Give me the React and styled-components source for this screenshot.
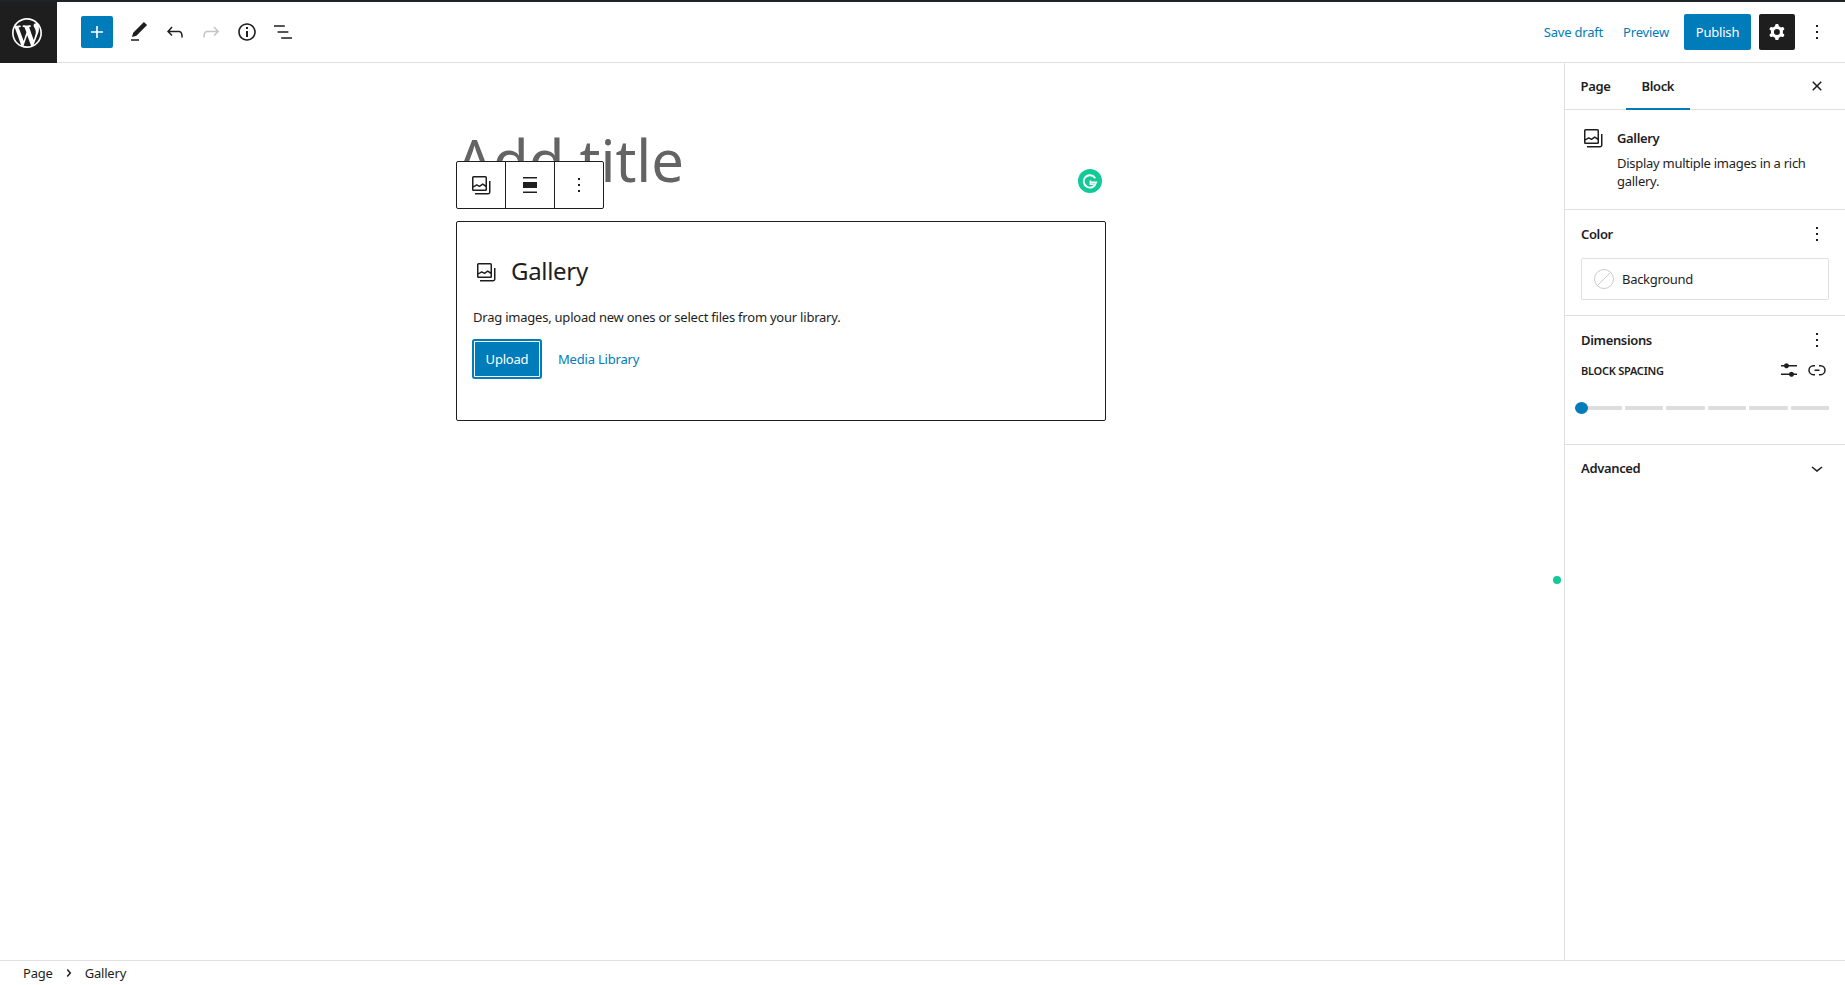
import React from 'react'
import styled, { createGlobalStyle } from 'styled-components'

const GlobalStyle = createGlobalStyle`
    html, body {
        margin: 0;
        padding: 0;
        height: 100%;
        background: #fff;
    }
    body {
        font-family: "Noto Sans", "Open Sans", sans-serif;
        font-size: 13px;
        color: #1e1e1e;
        overflow: hidden;
    }
    * {
        box-sizing: border-box;
    }
`

const BLUE = '#007cba'
const INK = '#1e1e1e'
const LINE = '#e0e0e0'
const GREEN = '#12c998'

const Icon = ({ d, size = 24, box = 24, color = 'currentColor', evenodd }) => (
    <svg width={size} height={size} viewBox={`0 0 ${box} ${box}`} fill={color} aria-hidden="true">
        <path d={d} fillRule={evenodd ? 'evenodd' : undefined} clipRule={evenodd ? 'evenodd' : undefined} />
    </svg>
)

const paths = {
    wordpress: 'M20 10c0-5.51-4.49-10-10-10C4.48 0 0 4.49 0 10c0 5.52 4.48 10 10 10 5.51 0 10-4.48 10-10zM7.78 15.37L4.37 6.22c.55-.02 1.17-.08 1.17-.08.5-.06.44-1.13-.06-1.11 0 0-1.45.11-2.37.11-.18 0-.37 0-.58-.01C4.12 2.69 6.87 1.11 10 1.11c2.33 0 4.45.87 6.05 2.34-.68-.11-1.65.39-1.65 1.58 0 .74.45 1.36.9 2.1.35.61.55 1.36.55 2.46 0 1.49-1.4 5-1.4 5l-3.03-8.37c.54-.02.82-.17.82-.17.5-.05.44-1.25-.06-1.22 0 0-1.44.12-2.38.12-.87 0-2.33-.12-2.33-.12-.5-.03-.56 1.2-.06 1.22l.92.08 1.26 3.41zM17.41 10c.24-.64.74-1.87.43-4.25.7 1.29 1.05 2.71 1.05 4.25 0 3.29-1.73 6.24-4.4 7.78.97-2.59 1.94-5.2 2.92-7.78zM6.1 18.09C3.12 16.65 1.11 13.53 1.11 10c0-1.3.23-2.48.72-3.59C3.25 10.3 4.67 14.2 6.1 18.09zm4.03-6.63l2.58 6.98c-.86.29-1.76.45-2.71.45-.79 0-1.57-.11-2.29-.33.81-2.38 1.62-4.74 2.42-7.1z',
    plus: 'M18 11.2h-5.2V6h-1.6v5.2H6v1.6h5.2V18h1.6v-5.2H18z',
    edit: 'M20.1 5.1L16.9 2 6.2 12.7l-1.3 4.4 4.5-1.3L20.1 5.1zM4 20.8h8v-1.5H4v1.5z',
    undo: 'M18.3 11.7c-.6-.6-1.4-.9-2.3-.9H6.7l2.9-3.3-1.1-1-4.5 5L8.5 16l1-1-2.7-2.7H16c.5 0 .9.2 1.3.5 1 1 1 3.4 1 4.5v.3h1.5v-.2c0-1.5 0-4.3-1.5-5.7z',
    redo: 'M15.6 6.5l-1.1 1 2.9 3.3H8c-.9 0-1.7.3-2.3.9-1.4 1.5-1.4 4.2-1.4 5.6v.2h1.5v-.3c0-1.1 0-3.5 1-4.5.3-.3.7-.5 1.3-.5h9.2L14.5 15l1.1 1.1 4.6-4.6-4.6-5z',
    info: 'M12 3.2c-4.8 0-8.8 3.9-8.8 8.8 0 4.8 3.9 8.8 8.8 8.8 4.8 0 8.8-3.9 8.8-8.8 0-4.8-4-8.8-8.8-8.8zm0 16c-4 0-7.2-3.3-7.2-7.2C4.8 8 8 4.8 12 4.8s7.2 3.3 7.2 7.2c0 4-3.2 7.2-7.2 7.2zM11 17h2v-6h-2v6zm0-8h2V7h-2v2z',
    listView: 'M13.8 5.2H3v1.5h10.8V5.2zm-3.6 12v1.5H21v-1.5H10.2zm7.2-6H6.6v1.5h10.8v-1.5z',
    cog: 'M10.289 4.836A1 1 0 0111.275 4h1.306a1 1 0 01.987.836l.244 1.466c.787.26 1.503.679 2.108 1.218l1.393-.522a1 1 0 011.216.437l.653 1.13a1 1 0 01-.23 1.273l-1.148.944a6.025 6.025 0 010 2.435l1.149.946a1 1 0 01.23 1.272l-.653 1.13a1 1 0 01-1.216.437l-1.394-.522c-.605.54-1.32.958-2.108 1.218l-.244 1.466a1 1 0 01-.987.836h-1.306a1 1 0 01-.986-.836l-.244-1.466a5.995 5.995 0 01-2.108-1.218l-1.394.522a1 1 0 01-1.217-.436l-.653-1.131a1 1 0 01.23-1.272l1.149-.946a6.026 6.026 0 010-2.435l-1.148-.944a1 1 0 01-.23-1.272l.653-1.131a1 1 0 011.217-.437l1.393.522a5.994 5.994 0 012.108-1.218l.244-1.466zM14.929 12a3 3 0 11-6 0 3 3 0 016 0z',
    more: 'M13 19h-2v-2h2v2zm0-6h-2v-2h2v2zm0-6h-2V5h2v2z',
    close: 'M12 13.06l3.712 3.713 1.061-1.06L13.061 12l3.712-3.712-1.06-1.06L12 10.938 8.288 7.227l-1.061 1.06L10.939 12l-3.712 3.712 1.06 1.061L12 13.061z',
    gallery: 'M16.375 4.5H4.625a.125.125 0 0 0-.125.125v8.254l2.859-1.54a.75.75 0 0 1 .68-.016l2.384 1.142 2.89-2.074a.75.75 0 0 1 .874 0l2.313 1.66V4.625a.125.125 0 0 0-.125-.125Zm.125 9.398-2.75-1.975-2.813 2.02a.75.75 0 0 1-.76.067l-2.444-1.17L4.5 14.583v1.792c0 .069.056.125.125.125h11.75a.125.125 0 0 0 .125-.125v-2.477ZM4.625 3C3.728 3 3 3.728 3 4.625v11.75C3 17.273 3.728 18 4.625 18h11.75c.898 0 1.625-.727 1.625-1.625V4.625C18 3.728 17.273 3 16.375 3H4.625ZM20 8v11c0 .69-.31 1-.999 1H6v1.5h13.001c1.52 0 2.499-.982 2.499-2.5V8H20Z',
    alignWide: 'M5 5.5h14V4H5v1.5ZM5 20h14v-1.5H5V20ZM5 9h14v6H5V9Z',
    sliders: 'M14.5 13.8c-1.1 0-2.1.7-2.4 1.8H4V17h8.1c.3 1 1.3 1.8 2.4 1.8s2.1-.7 2.4-1.8H20v-1.5h-3.1c-.3-1-1.3-1.7-2.4-1.7zM11.9 7c-.3-1-1.3-1.8-2.4-1.8S7.4 6 7.1 7H4v1.5h3.1c.3 1 1.3 1.8 2.4 1.8s2.1-.7 2.4-1.8H20V7h-8.1z',
    linkOff: 'M10 17.389H8.444A5.194 5.194 0 1 1 8.444 7H10v1.5H8.444a3.694 3.694 0 0 0 0 7.389H10v1.5ZM14 7h1.556a5.194 5.194 0 0 1 0 10.39H14v-1.5h1.556a3.694 3.694 0 0 0 0-7.39H14V7Zm-4.5 6h5v-1.5h-5V13Z',
    chevronDown: 'M17.5 11.6L12 16l-5.5-4.4.9-1.2L12 14l4.5-3.6 1 1.2z',
    chevronRight: 'M10.8622 8.04053L14.2805 12.0286L10.8622 16.0167L9.72327 15.0405L12.3049 12.0286L9.72327 9.01672L10.8622 8.04053Z',
}

const GalleryIcon = () => <Icon d={paths.gallery} evenodd />

export default function App () {
    return (
        <>
            <GlobalStyle />
            <Frame>
                <Header>
                    <HeaderLeft>
                        <LogoTile>
                            <Icon d={paths.wordpress} size={30} box={20} color="#fff" />
                        </LogoTile>
                        <ToolGroup>
                            <AddButton><Icon d={paths.plus} /></AddButton>
                            <ToolButton><Icon d={paths.edit} /></ToolButton>
                            <ToolButton><Icon d={paths.undo} /></ToolButton>
                            <ToolButton $muted><Icon d={paths.redo} /></ToolButton>
                            <ToolButton><Icon d={paths.info} /></ToolButton>
                            <ToolButton><Icon d={paths.listView} /></ToolButton>
                        </ToolGroup>
                    </HeaderLeft>
                    <HeaderRight>
                        <HeaderLink>Save draft</HeaderLink>
                        <HeaderLink>Preview</HeaderLink>
                        <PublishButton>Publish</PublishButton>
                        <SettingsButton><Icon d={paths.cog} evenodd /></SettingsButton>
                        <MoreButton><Icon d={paths.more} /></MoreButton>
                    </HeaderRight>
                </Header>

                <Main>
                    <Canvas>
                        <Column>
                            <TitlePlaceholder>Add title</TitlePlaceholder>
                            <BlockToolbar>
                                <BlockTool $first><GalleryIcon /></BlockTool>
                                <BlockTool><Icon d={paths.alignWide} /></BlockTool>
                                <BlockTool><Icon d={paths.more} /></BlockTool>
                            </BlockToolbar>
                            <GalleryCard>
                                <CardLabel>
                                    <GalleryIcon />
                                    <span>Gallery</span>
                                </CardLabel>
                                <CardHint>Drag images, upload new ones or select files from your library.</CardHint>
                                <CardActions>
                                    <UploadButton>Upload</UploadButton>
                                    <TextLink>Media Library</TextLink>
                                </CardActions>
                            </GalleryCard>
                            <GrammarlyBadge>
                                <svg width="24" height="24" viewBox="0 0 24 24" aria-hidden="true">
                                    <circle cx="12" cy="12" r="12" fill={GREEN} />
                                    <path d="M17.2 9.2A6.2 6.2 0 1 0 18 13.4h-5" fill="none" stroke="#fff" strokeWidth="1.9" />
                                    <path d="M12.4 11.6v3.6h3.4" fill="none" stroke="#fff" strokeWidth="1.6" />
                                </svg>
                            </GrammarlyBadge>
                        </Column>
                        <GreenDot />
                    </Canvas>

                    <Sidebar>
                        <TabBar>
                            <Tabs>
                                <Tab>Page</Tab>
                                <Tab $active>Block</Tab>
                            </Tabs>
                            <IconSlot><Icon d={paths.close} /></IconSlot>
                        </TabBar>

                        <BlockCard>
                            <GalleryIcon />
                            <BlockCardText>
                                <BlockCardTitle>Gallery</BlockCardTitle>
                                <BlockCardDescription>Display multiple images in a rich gallery.</BlockCardDescription>
                            </BlockCardText>
                        </BlockCard>

                        <Panel $height={106}>
                            <PanelHead>
                                <PanelTitle>Color</PanelTitle>
                                <IconSlot><Icon d={paths.more} /></IconSlot>
                            </PanelHead>
                            <ColorRow>
                                <Swatch />
                                <span>Background</span>
                            </ColorRow>
                        </Panel>

                        <Panel $height={129}>
                            <PanelHead>
                                <PanelTitle>Dimensions</PanelTitle>
                                <IconSlot><Icon d={paths.more} /></IconSlot>
                            </PanelHead>
                            <SpacingHead>
                                <SpacingLabel>BLOCK SPACING</SpacingLabel>
                                <SpacingIcons>
                                    <Icon d={paths.sliders} />
                                    <Icon d={paths.linkOff} />
                                </SpacingIcons>
                            </SpacingHead>
                            <SliderTrack>
                                <SliderThumb />
                                {[0, 1, 2, 3, 4, 5].map(i => <SliderStep key={i} $lead={i === 0} />)}
                            </SliderTrack>
                        </Panel>

                        <AdvancedRow>
                            <PanelTitle>Advanced</PanelTitle>
                            <IconSlot><Icon d={paths.chevronDown} /></IconSlot>
                        </AdvancedRow>
                    </Sidebar>
                </Main>

                <Footer>
                    <span>Page</span>
                    <Icon d={paths.chevronRight} />
                    <span>Gallery</span>
                </Footer>
            </Frame>
        </>
    )
}

const Frame = styled.div`
    display: flex;
    flex-direction: column;
    height: 100vh;
    border-top: 2px solid #1d2327;
`

const Header = styled.header`
    display: flex;
    align-items: center;
    justify-content: space-between;
    height: 61px;
    flex: none;
    border-bottom: 1px solid ${LINE};
    background: #fff;
`

const HeaderLeft = styled.div`
    display: flex;
    align-items: center;
    height: 100%;
`

const LogoTile = styled.div`
    display: flex;
    align-items: center;
    justify-content: center;
    width: 57px;
    height: 61px;
    padding: 1px 3px 0 0;
    background: ${INK};
`

const ToolGroup = styled.div`
    display: flex;
    align-items: center;
    margin-left: 24px;
`

const AddButton = styled.div`
    display: flex;
    align-items: center;
    justify-content: center;
    width: 32px;
    height: 32px;
    margin-right: 8px;
    border-radius: 2px;
    background: ${BLUE};
    color: #fff;
`

const ToolButton = styled.div`
    display: flex;
    align-items: center;
    justify-content: center;
    width: 36px;
    height: 36px;
    color: ${props => props.$muted ? '#c4c4c4' : INK};
`

const HeaderRight = styled.div`
    display: flex;
    align-items: center;
    height: 100%;
    padding-right: 16px;
`

const TextLink = styled.span`
    color: ${BLUE};
    font-size: 13px;
    letter-spacing: -0.2px;
`

const HeaderLink = styled(TextLink)`
    margin-right: 20px;

    &:nth-child(2) {
        margin-right: 15px;
    }
`

const PublishButton = styled.div`
    display: flex;
    align-items: center;
    justify-content: center;
    width: 67px;
    height: 36px;
    border-radius: 2px;
    background: ${BLUE};
    color: #fff;
    letter-spacing: -0.2px;
`

const SettingsButton = styled.div`
    display: flex;
    align-items: center;
    justify-content: center;
    width: 36px;
    height: 36px;
    margin-left: 8px;
    border-radius: 2px;
    background: ${INK};
    color: #fff;
`

const MoreButton = styled.div`
    display: flex;
    align-items: center;
    justify-content: center;
    width: 24px;
    height: 36px;
    margin-left: 10px;
`

const Main = styled.main`
    flex: 1;
    display: flex;
    min-height: 0;
`

const Canvas = styled.section`
    position: relative;
    flex: 1;
    min-width: 0;
    padding-right: 2px;
`

const Column = styled.div`
    position: relative;
    width: 650px;
    margin: 0 auto;
    padding-top: 59px;
`

const TitlePlaceholder = styled.div`
    height: 99px;
    font-size: 58px;
    line-height: 76px;
    color: #646464;
    white-space: nowrap;
`

const BlockToolbar = styled.div`
    position: absolute;
    top: 98px;
    left: 0;
    display: flex;
    height: 48px;
    border: 1px solid ${INK};
    border-radius: 2px;
    background: #fff;
`

const BlockTool = styled.div`
    display: flex;
    align-items: center;
    justify-content: center;
    width: ${props => props.$first ? '48px' : '49px'};
    border-left: ${props => props.$first ? 'none' : `1px solid ${INK}`};
`

const GalleryCard = styled.div`
    display: flex;
    flex-direction: column;
    height: 200px;
    padding: 30px 16px 0;
    border: 1px solid ${INK};
    border-radius: 2px;
`

const CardLabel = styled.div`
    display: flex;
    align-items: center;
    gap: 13px;
    height: 36px;
    padding-left: 1px;
    font-size: 24px;
    letter-spacing: -0.3px;

    svg {
        margin-top: 3px;
    }
`

const CardHint = styled.p`
    margin: 20px 0 0;
    font-size: 13px;
    line-height: 18px;
    letter-spacing: -0.225px;
`

const CardActions = styled.div`
    display: flex;
    align-items: center;
    gap: 16px;
    margin-top: 13px;
`

const UploadButton = styled.div`
    display: flex;
    align-items: center;
    justify-content: center;
    width: 70px;
    height: 40px;
    margin-left: -1px;
    border-radius: 3px;
    background: ${BLUE};
    box-shadow: inset 0 0 0 2px ${BLUE}, inset 0 0 0 3px #fff;
    color: #fff;
    letter-spacing: -0.2px;
`

const GrammarlyBadge = styled.div`
    position: absolute;
    top: 106px;
    right: 4px;
    width: 24px;
    height: 24px;
`

const GreenDot = styled.div`
    position: absolute;
    top: 513px;
    right: 3px;
    width: 8px;
    height: 8px;
    border-radius: 50%;
    background: ${GREEN};
`

const Sidebar = styled.aside`
    flex: none;
    width: 281px;
    border-left: 1px solid ${LINE};
`

const TabBar = styled.div`
    display: flex;
    align-items: stretch;
    justify-content: space-between;
    height: 47px;
    padding-right: 16px;
    border-bottom: 1px solid ${LINE};
`

const Tabs = styled.div`
    display: flex;
`

const Tab = styled.div`
    display: flex;
    align-items: center;
    padding: 0 15.5px 2px;
    height: 47px;
    font-weight: 600;
    letter-spacing: -0.35px;
    box-shadow: ${props => props.$active ? `inset 0 -2px 0 ${BLUE}` : 'none'};
`

const IconSlot = styled.div`
    display: flex;
    align-items: center;
    justify-content: center;
    width: 24px;
    color: ${INK};
`

const BlockCard = styled.div`
    display: flex;
    gap: 12px;
    height: 100px;
    padding: 16px;
    border-bottom: 1px solid ${LINE};
`

const BlockCardText = styled.div`
    flex: 1;
    padding-top: 2px;
`

const BlockCardTitle = styled.div`
    font-weight: 600;
    line-height: 20px;
    letter-spacing: -0.35px;
`

const BlockCardDescription = styled.div`
    margin-top: 6px;
    line-height: 18px;
    letter-spacing: -0.27px;
`

const Panel = styled.div`
    height: ${props => props.$height}px;
    padding: 0 16px;
    border-bottom: 1px solid ${LINE};
`

const PanelHead = styled.div`
    display: flex;
    align-items: center;
    justify-content: space-between;
    height: 48px;
`

const PanelTitle = styled.div`
    font-weight: 600;
    letter-spacing: -0.35px;
`

const ColorRow = styled.div`
    display: flex;
    align-items: center;
    gap: 8px;
    height: 42px;
    padding: 0 12px;
    border: 1px solid ${LINE};
    border-radius: 2px;
    letter-spacing: -0.3px;
`

const Swatch = styled.span`
    width: 20px;
    height: 20px;
    border: 1px solid #ccc;
    border-radius: 50%;
    background: linear-gradient(-45deg, transparent 48%, #ccc 48%, #ccc 52%, transparent 52%);
`

const SpacingHead = styled.div`
    display: flex;
    align-items: center;
    justify-content: space-between;
    height: 24px;
    margin-top: -6px;
`

const SpacingLabel = styled.div`
    font-size: 11px;
    font-weight: 600;
    letter-spacing: -0.25px;
`

const SpacingIcons = styled.div`
    display: flex;
    gap: 4px;
`

const SliderTrack = styled.div`
    position: relative;
    display: flex;
    gap: 3px;
    margin-top: 24px;
`

const SliderThumb = styled.span`
    position: absolute;
    top: -4px;
    left: -6px;
    width: 13px;
    height: 12px;
    border-radius: 50%;
    background: ${BLUE};
`

const SliderStep = styled.span`
    flex: ${props => props.$lead ? '0 0 41px' : '1'};
    height: 4px;
    border-radius: 1px;
    background: #ddd;
`

const AdvancedRow = styled.div`
    display: flex;
    align-items: center;
    justify-content: space-between;
    height: 46px;
    padding: 0 16px;
`

const Footer = styled.footer`
    display: flex;
    align-items: center;
    gap: 4px;
    flex: none;
    height: 25px;
    padding-left: 23px;
    border-top: 1px solid ${LINE};
    background: #fff;
    letter-spacing: -0.2px;
`
